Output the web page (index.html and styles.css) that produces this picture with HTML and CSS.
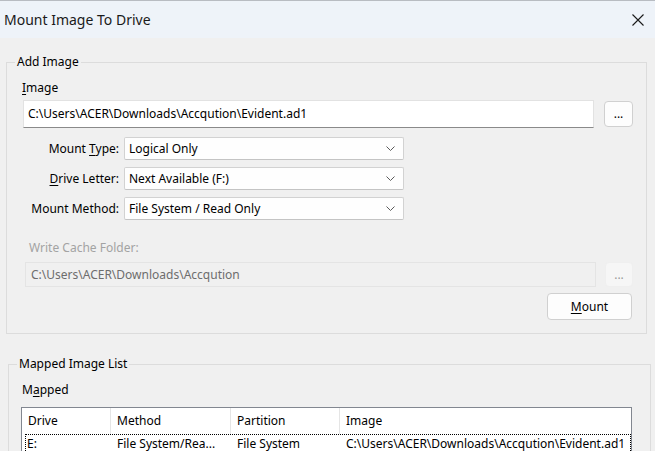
FILE: index.html
```html
<!DOCTYPE html>
<html>
<head>
<meta charset="utf-8">
<link rel="stylesheet" href="styles.css">
</head>
<body>
<div class="window">
  <div class="titlebar">
    <span class="title">Mount Image To Drive</span>
    <svg class="close" width="12" height="12" viewBox="0 0 12 12"><path d="M0.5 0.5 L11.5 11.5 M11.5 0.5 L0.5 11.5" stroke="#1a1a1a" stroke-width="1.1" fill="none"/></svg>
  </div>
  <div class="content">
    <fieldset class="group add">
      <legend>Add Image</legend>
      <div class="label image-label"><u>I</u>mage</div>
      <div class="path-row">
        <div class="textbox">C:\Users\ACER\Downloads\Accqution\Evident.ad1</div>
        <button class="btn dots">...</button>
      </div>
      <div class="form">
        <label>Mount <u>T</u>ype:</label>
        <div class="combo"><span>Logical Only</span><svg width="9" height="5" viewBox="0 0 9 5"><path d="M0.5 0.5 L4.5 4.5 L8.5 0.5" stroke="#5a5a5a" fill="none"/></svg></div>
        <label><u>D</u>rive Letter:</label>
        <div class="combo"><span>Next Available (F:)</span><svg width="9" height="5" viewBox="0 0 9 5"><path d="M0.5 0.5 L4.5 4.5 L8.5 0.5" stroke="#5a5a5a" fill="none"/></svg></div>
        <label>Mount Method:</label>
        <div class="combo"><span>File System / Read Only</span><svg width="9" height="5" viewBox="0 0 9 5"><path d="M0.5 0.5 L4.5 4.5 L8.5 0.5" stroke="#5a5a5a" fill="none"/></svg></div>
      </div>
      <div class="label cache-label">Write Cache Folder:</div>
      <div class="cache-row">
        <div class="textbox disabled">C:\Users\ACER\Downloads\Accqution</div>
        <button class="btn dots disabled">...</button>
      </div>
      <div class="mount-row">
        <button class="btn mount"><u>M</u>ount</button>
      </div>
    </fieldset>
    <fieldset class="group mapped">
      <legend>Mapped Image List</legend>
      <div class="label mapped-label">M<u>a</u>pped</div>
      <div class="listview">
        <div class="lv-header">
          <div class="col c1">Drive</div>
          <div class="col c2">Method</div>
          <div class="col c3">Partition</div>
          <div class="col c4">Image</div>
        </div>
        <div class="lv-row">
          <div class="col c1">E:</div>
          <div class="col c2">File System/Rea...</div>
          <div class="col c3">File System</div>
          <div class="col c4">C:\Users\ACER\Downloads\Accqution\Evident.ad1</div>
        </div>
      </div>
    </fieldset>
  </div>
</div>
</body>
</html>
```
FILE: styles.css
```css
* { box-sizing: border-box; }
html, body {
  margin: 0;
  padding: 0;
  width: 655px;
  height: 451px;
  overflow: hidden;
  background: #f0f0f0;
  font-family: "Noto Sans", "Liberation Sans", sans-serif;
  font-size: 12px;
  color: #000;
}
u { text-decoration: underline; text-underline-offset: 2px; }
.window { width: 655px; height: 451px; }
.titlebar {
  height: 38px;
  background: #eef3f9;
  border-top: 1px solid #b8bcc2;
  display: flex;
  align-items: center;
  justify-content: space-between;
  padding: 0 11px 0 4px;
}
.title { font-size: 14px; color: #1a1a1a; }
.close { display: block; }
.content { padding: 16px 8px 0 6px; }
.group {
  margin: 0;
  border: 1px solid #dcdcdc;
  padding: 0 13px 13px 16px;
  min-width: 0;
}
.group legend {
  padding: 0 2px;
  margin-left: -8px;
  line-height: 16px;
}
.label { line-height: 16px; }
.image-label { margin-top: 10px; margin-left: -1px; }
.path-row {
  display: flex;
  align-items: center;
  gap: 10px;
  margin-top: 4px;
}
.textbox {
  flex: 1;
  height: 28px;
  background: #fff;
  border: 1px solid #e2e2e2;
  border-bottom: 1px solid #8a8a8a;
  padding-left: 4px;
  line-height: 26px;
  white-space: nowrap;
  overflow: hidden;
}
.btn {
  font: inherit;
  color: #000;
  background: #fdfdfd;
  border: 1px solid #d0d0d0;
  border-radius: 4px;
  padding: 0;
}
.dots { width: 29px; height: 26px; line-height: 20px; }
.form {
  display: grid;
  grid-template-columns: 96px 280px;
  column-gap: 5px;
  row-gap: 7px;
  margin-top: 9px;
}
.form label { text-align: right; line-height: 23px; }
.combo {
  height: 23px;
  background: #fefefe;
  border: 1px solid #d2d2d2;
  border-bottom-color: #c4c4c4;
  border-radius: 2px;
  display: flex;
  align-items: center;
  justify-content: space-between;
  padding: 0 8px 0 4px;
}
.cache-label { margin-top: 20px; margin-left: 6px; color: #a3a3a3; }
.cache-row {
  display: flex;
  align-items: center;
  gap: 9px;
  margin-top: 6px;
  margin-left: 2px;
}
.textbox.disabled {
  height: 25px;
  background: #f0f0f0;
  border: 1px solid #e4e4e4;
  color: #6d6d6d;
  padding-left: 5px;
  line-height: 23px;
}
.dots.disabled {
  height: 25px;
  width: 28px;
  background: #f6f6f6;
  border-color: #efefef;
  color: #9a9a9a;
}
.mount-row { display: flex; justify-content: flex-end; margin-top: 6px; }
.mount { width: 85px; height: 27px; margin-right: 1px; }
.mapped {
  margin-top: 22px;
  margin-left: 2px;
  margin-right: -4px;
  padding: 0 18px 40px 12px;
}
.mapped legend { margin-left: -4px; }
.mapped-label { margin-top: 10px; margin-left: 1px; }
.listview {
  margin-top: 9px;
  border: 1px solid #828790;
  background: #fff;
  height: 60px;
}
.lv-header, .lv-row {
  display: grid;
  white-space: nowrap;
}
.lv-header { height: 26px; grid-template-columns: 89px 120px 109px 1fr; }
.lv-header .col {
  line-height: 26px;
  padding-left: 6px;
  border-right: 1px solid #e5e5e5;
}
.lv-header .c4 { border-right: none; }
.lv-row {
  grid-template-columns: 85px 120px 109px 1fr;
  margin-left: 3px;
  height: 19px;
  border: 1px dotted #000;
  border-bottom: none;
}
.lv-row .col { line-height: 18px; overflow: hidden; padding-left: 6px; }
.lv-row .c1 { padding-left: 1px; }
```
